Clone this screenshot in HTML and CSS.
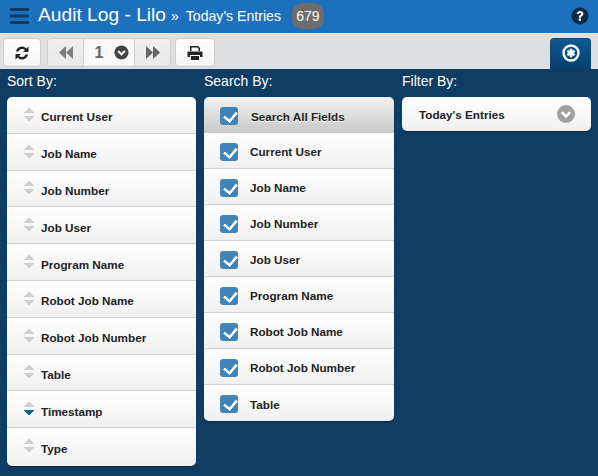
FILE: index.html
```html
<!DOCTYPE html>
<html>
<head>
<meta charset="utf-8">
<title>Audit Log</title>
<link rel="stylesheet" href="styles.css">
</head>
<body>
<header class="header">
  <svg class="menu" viewBox="0 0 19 16" width="19" height="16"><path d="M0 0h19v3H0zM0 6.500h19v3H0zM0 13h19v3H0z" fill="#0e3d63"/></svg>
  <span class="title">Audit Log - Lilo</span>
  <span class="sep">»</span>
  <span class="crumb">Today's Entries</span>
  <span class="count">679</span>
  <svg class="help" viewBox="0 0 18 18" width="18" height="18"><circle cx="9" cy="9" r="8.500" fill="#0b2a45"/><path d="M5.800 7c0-2 1.400-3 3.300-3s3.300 1 3.300 2.700c0 1.300-.8 2-1.700 2.600-.6.400-.8.700-.8 1.400H7.800c0-1.300.4-2 1.300-2.600.7-.5 1.100-.8 1.100-1.300 0-.5-.4-.9-1.100-.9-.8 0-1.200.5-1.200 1.100z M7.800 11.600h2.200v2.200H7.800z" fill="#fff"/></svg>
</header>
<nav class="toolbar">
  <button class="btn solo"><svg viewBox="0 0 16 16" width="16" height="16"><path d="M2 6.500A6 6 0 0 1 12.400 3.600L14.500 1.500V7H9l2-2A4 4 0 0 0 4.500 6.500zM14 9.500A6 6 0 0 1 3.600 12.400L1.500 14.500V9H7l-2 2A4 4 0 0 0 11.500 9.500z" fill="#222"/></svg></button>
  <div class="pager">
    <span class="seg nav"><svg viewBox="0 0 16 13" width="16" height="13"><path d="M8 0v13L1 6.500zM15 0v13L8 6.500z" fill="#7d7d7d"/></svg></span>
    <span class="seg page">1<svg viewBox="0 0 16 16" width="15" height="15"><circle cx="8" cy="8" r="7.500" fill="#444"/><path d="M4.500 6.500L8 10l3.500-3.500" stroke="#fff" stroke-width="2.200" fill="none"/></svg></span>
    <span class="seg nav"><svg viewBox="0 0 16 13" width="16" height="13"><path d="M1 0v13l7-6.500zM8 0v13l7-6.500z" fill="#666"/></svg></span>
  </div>
  <button class="btn solo print"><svg viewBox="0 0 16 14" width="16" height="14"><path d="M3 0h8l2 2v3h-1.500V2.700L10.300 1.500H4.500V5H3zM.5 5.500h15v5.500h-2.500V9H3v2H.5zM4 10h8v4H4z" fill="#222"/></svg></button>
  <button class="tab"><svg viewBox="0 0 18 18" width="18" height="18"><circle cx="9" cy="9" r="7.500" fill="none" stroke="#fff" stroke-width="2.400"/><path d="M9 4.800v8.400M5.400 6.900l7.200 4.200M12.600 6.900l-7.200 4.200" stroke="#fff" stroke-width="2.400"/></svg></button>
</nav>
<main class="panels">
  <section class="col">
    <h2 class="label">Sort By:</h2>
    <ul class="list sort">
      <li><i class="arrows"></i>Current User</li>
      <li><i class="arrows"></i>Job Name</li>
      <li><i class="arrows"></i>Job Number</li>
      <li><i class="arrows"></i>Job User</li>
      <li><i class="arrows"></i>Program Name</li>
      <li><i class="arrows"></i>Robot Job Name</li>
      <li><i class="arrows"></i>Robot Job Number</li>
      <li><i class="arrows"></i>Table</li>
      <li><i class="arrows active"></i>Timestamp</li>
      <li><i class="arrows"></i>Type</li>
    </ul>
  </section>
  <section class="col">
    <h2 class="label">Search By:</h2>
    <ul class="list search">
      <li class="all"><i class="check"></i>Search All Fields</li>
      <li><i class="check"></i>Current User</li>
      <li><i class="check"></i>Job Name</li>
      <li><i class="check"></i>Job Number</li>
      <li><i class="check"></i>Job User</li>
      <li><i class="check"></i>Program Name</li>
      <li><i class="check"></i>Robot Job Name</li>
      <li><i class="check"></i>Robot Job Number</li>
      <li><i class="check"></i>Table</li>
    </ul>
  </section>
  <section class="col">
    <h2 class="label">Filter By:</h2>
    <div class="select">Today's Entries
      <svg viewBox="0 0 18 18" width="18" height="18"><circle cx="9" cy="9" r="9" fill="#a0a0a0"/><path d="M4.800 7.200L9 11.400l4.200-4.200" stroke="#fff" stroke-width="2.600" fill="none"/></svg>
    </div>
  </section>
</main>
</body>
</html>
```
FILE: styles.css
```css
* { box-sizing: border-box; }
html, body { margin: 0; padding: 0; }
body {
  width: 598px;
  height: 476px;
  overflow: hidden;
  background: #0f3d63;
  font-family: "Liberation Sans", Arial, sans-serif;
}
.header {
  height: 34px;
  background: #1c70bd;
  border-bottom: 1px solid #e4e8ec;
  display: flex;
  align-items: center;
  padding: 0 9px 1px 10px;
  color: #fff;
}
.menu { margin-right: 9px; }
.title { font-size: 19.200px; margin-right: 5px; margin-bottom: 3px; }
.sep { font-size: 14px; margin-right: 7px; }
.crumb { font-size: 14.100px; }
.count {
  margin-left: 11px;
  width: 32px;
  height: 26px;
  border-radius: 10px;
  background: #6d6d6d;
  font-size: 14px;
  display: flex;
  align-items: center;
  justify-content: center;
}
.help { margin-left: auto; }
.toolbar {
  height: 35px;
  background: #dddfe1;
  display: flex;
  align-items: flex-start;
  padding: 4px 7px 0 3px;
}
.btn, .pager {
  height: 29px;
  border: 1px solid #ccc;
  border-radius: 4px;
  background: linear-gradient(#fff, #f4f4f4);
  padding: 0;
  display: flex;
  align-items: center;
  justify-content: center;
}
.solo { width: 38px; }
.print { width: 40px; margin-left: 4px; }
.pager { margin-left: 6px; background: #f0f0f0; width: 124px; }
.seg { height: 100%; display: flex; align-items: center; justify-content: center; }
.nav { width: 36px; background: linear-gradient(#f0f0f0, #e8e8e8); }
.nav:first-child { border-right: 1px solid #ccc; border-radius: 3px 0 0 3px; }
.nav:last-child { border-left: 1px solid #ccc; border-radius: 0 3px 3px 0; }
.page {
  flex: 1;
  background: #f8f8f8;
  color: #666;
  font-size: 16px;
  font-weight: 700;
  gap: 11px;
  padding-left: 6px;
}
.tab {
  margin-left: auto;
  width: 41px;
  height: 31px;
  padding: 0 0 2px;
  border: 1px solid #0c4a7a;
  border-bottom: 0;
  border-radius: 4px 4px 0 0;
  background: linear-gradient(#0e5a94, #063f6e);
  display: flex;
  align-items: center;
  justify-content: center;
}
.panels {
  display: grid;
  grid-template-columns: 189px 190px 189px;
  column-gap: 8px;
  padding: 0 7px;
}
.label {
  margin: 0;
  height: 28px;
  padding-top: 4px;
  color: #fff;
  font-size: 14px;
  font-weight: 400;
  line-height: 17px;
}
.list {
  list-style: none;
  margin: 0;
  padding: 0;
  border-radius: 5px;
  overflow: hidden;
  box-shadow: 0 1px 1px rgba(0, 0, 0, .4);
}
.list li {
  display: flex;
  align-items: center;
  background: linear-gradient(#fff, #f0f0f0);
  border-bottom: 1px solid #cfcfcf;
  font-size: 11.700px;
  font-weight: 700;
  color: #222;
}
.list li:last-child { border-bottom: 0; }
.sort li { height: 36.800px; padding: 4px 0 0 17px; }
.sort li:last-child { height: 37.800px; padding-top: 3px; padding-bottom: 1px; }
.search li { height: 36px; padding: 2px 0 0 16px; }
.arrows {
  width: 10px;
  height: 15px;
  margin: 0 7px 5px 0;
  background:
    linear-gradient(to top right, transparent 50%, #cfcfcf 50%) 0 100% / 5px 6px no-repeat,
    linear-gradient(to top left, transparent 50%, #cfcfcf 50%) 100% 100% / 5px 6px no-repeat,
    linear-gradient(to bottom right, transparent 50%, #cfcfcf 50%) 0 0 / 5px 6px no-repeat,
    linear-gradient(to bottom left, transparent 50%, #cfcfcf 50%) 100% 0 / 5px 6px no-repeat;
}
.arrows.active {
  background:
    linear-gradient(to top right, transparent 50%, #0e5f9e 50%) 0 100% / 5px 6px no-repeat,
    linear-gradient(to top left, transparent 50%, #0e5f9e 50%) 100% 100% / 5px 6px no-repeat,
    linear-gradient(to bottom right, transparent 50%, #cfcfcf 50%) 0 0 / 5px 6px no-repeat,
    linear-gradient(to bottom left, transparent 50%, #cfcfcf 50%) 100% 0 / 5px 6px no-repeat;
}
.check {
  position: relative;
  width: 18px;
  height: 18px;
  margin: 0 12px 0 0;
  border-radius: 3px;
  background: #4184b8;
}
.check::after {
  content: "";
  position: absolute;
  left: 6px;
  top: 2px;
  width: 6px;
  height: 10px;
  border: solid #fff;
  border-width: 0 3.500px 3.500px 0;
  border-radius: 1px;
  transform: rotate(40deg);
}
.search .all {
  height: 36px;
  background: linear-gradient(#f2f2f2, #c8c8c8);
  border-bottom: 0;
  padding: 3px 0 0 16px;
  text-shadow: 0 1px 0 #fff;
}
.search .all .check { margin: 0 13px 1px 0; }
.select {
  height: 34px;
  border-radius: 5px;
  background: linear-gradient(#fff, #f0f0f0);
  display: flex;
  align-items: center;
  justify-content: space-between;
  padding: 0 16px 0 17px;
  font-size: 11.700px;
  font-weight: 700;
  color: #222;
  box-shadow: 0 1px 1px rgba(0, 0, 0, .4);
}
```
